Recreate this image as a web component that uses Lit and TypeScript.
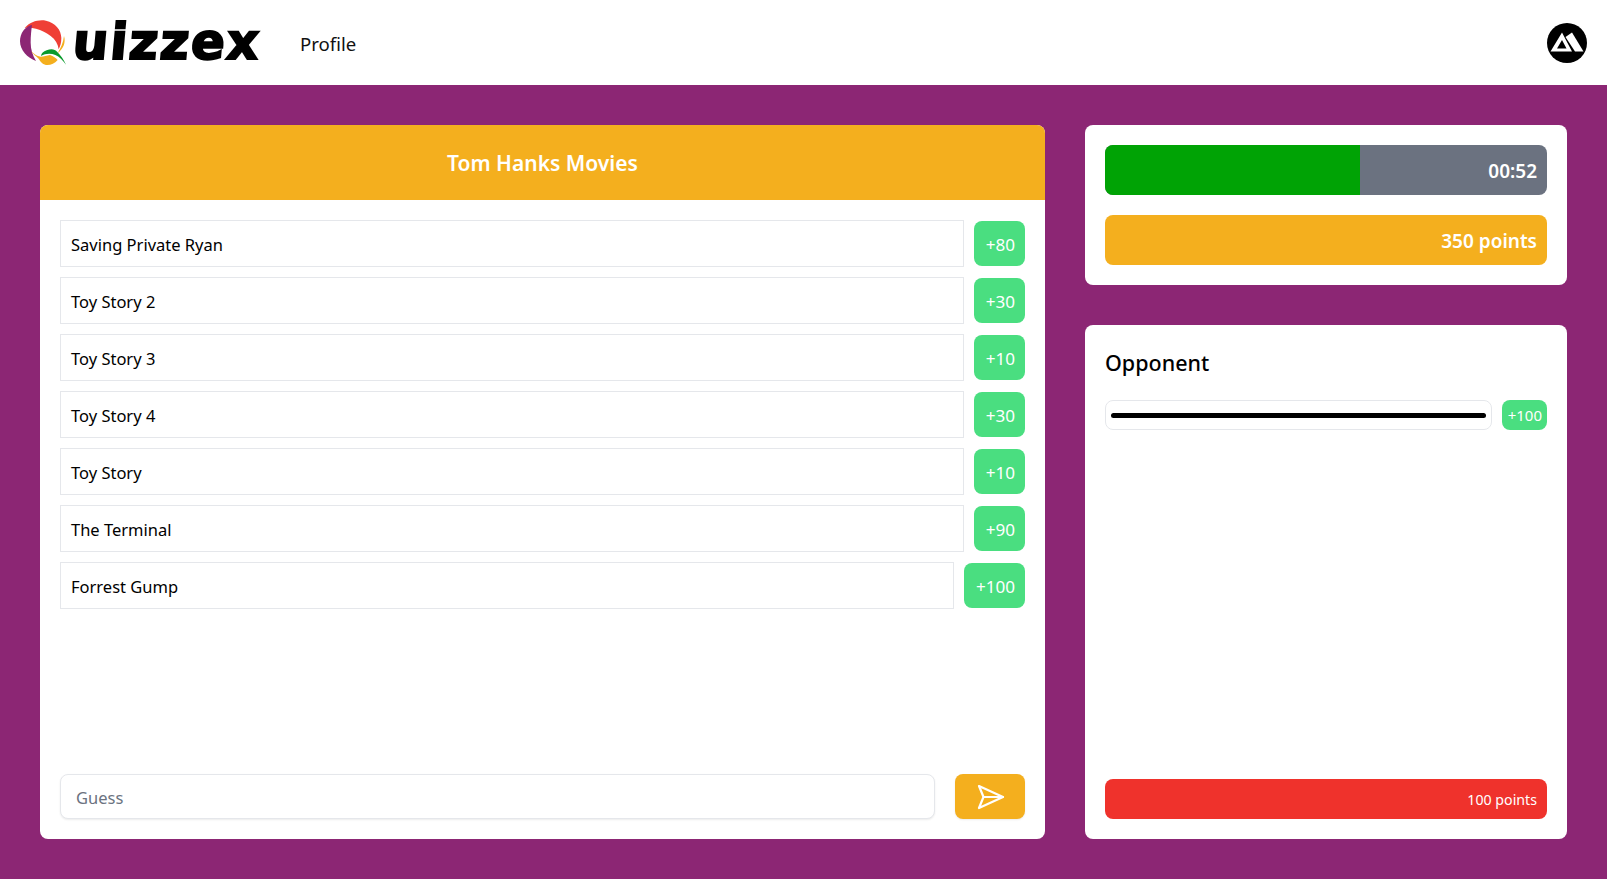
import { LitElement, html, css } from 'lit';
import { customElement } from 'lit/decorators.js';

const ANSWERS = [
  { title: 'Saving Private Ryan', points: 80 },
  { title: 'Toy Story 2', points: 30 },
  { title: 'Toy Story 3', points: 10 },
  { title: 'Toy Story 4', points: 30 },
  { title: 'Toy Story', points: 10 },
  { title: 'The Terminal', points: 90 },
  { title: 'Forrest Gump', points: 100 },
];

@customElement('app-root')
export class AppRoot extends LitElement {
  static styles = css`
    :host {
      display: block;
      height: 879px;
      overflow: hidden;
      background: #8c2674;
      color: #000;
      font-family: 'Noto Sans', 'Open Sans', sans-serif;
    }
    * { box-sizing: border-box; }

    .nav {
      display: flex;
      align-items: center;
      height: 85px;
      background: #fff;
      padding: 0 20px;
    }
    .brand { display: flex; align-items: center; width: 280px; }
    .q { width: 54px; height: 54px; flex: none; margin-left: -4px; }
    .wordmark {
      display: inline-block;
      font-family: 'DejaVu Sans', sans-serif;
      font-weight: 700;
      font-size: 50px;
      line-height: 1;
      letter-spacing: 1.800px;
      -webkit-text-stroke: 2px #000;
      transform: skewX(-5deg);
      margin: -2px 0 0 3px;
    }
    .link { font-size: 18.600px; color: #111; padding-top: 2px; }
    .avatar { width: 40px; height: 40px; margin-left: auto; }

    .main {
      display: grid;
      grid-template-columns: 1005px 482px;
      gap: 40px;
      padding: 40px;
      height: 794px;
    }
    .card { background: #fff; border-radius: 8px; overflow: hidden; }

    .quiz { display: flex; flex-direction: column; }
    .quiz-head {
      display: flex;
      align-items: center;
      justify-content: center;
      height: 75px;
      background: #f4af1e;
      color: #fff;
      font-size: 21px;
      font-weight: 600;
    }
    .quiz-body { flex: 1; display: flex; flex-direction: column; padding: 20px; }
    .answers { flex: 1; display: flex; flex-direction: column; gap: 10px; }
    .answer { display: flex; align-items: center; gap: 10px; height: 47px; }
    .answer-title {
      flex: 1;
      height: 47px;
      display: flex;
      align-items: center;
      padding: 2px 10px 0;
      border: 1px solid #e5e7eb;
      font-size: 16.500px;
    }
    .pts {
      display: flex;
      align-items: center;
      justify-content: center;
      height: 45px;
      padding: 1px 10px 0 12px;
      background: #4ade80;
      color: #fff;
      border-radius: 8px;
      font-size: 17.100px;
    }

    .guess { display: flex; gap: 20px; height: 45px; }
    .guess input {
      flex: 1;
      border: 1px solid #e5e7eb;
      border-radius: 8px;
      padding: 2px 15px 0;
      font: inherit;
      font-size: 16.500px;
      box-shadow: 0 1px 2px rgba(0, 0, 0, 0.08);
      outline: none;
    }
    .guess input::placeholder { color: #6b7280; }
    .send {
      width: 70px;
      border: 0;
      padding: 0 0 0 2px;
      border-radius: 8px;
      background: #f4af1e;
      display: flex;
      align-items: center;
      justify-content: center;
      box-shadow: 0 1px 2px rgba(0, 0, 0, 0.08);
    }
    .send svg { width: 28px; height: 26px; }

    .side { display: flex; flex-direction: column; gap: 40px; }
    .status { display: flex; flex-direction: column; gap: 20px; padding: 20px; height: 160px; }
    .bar {
      position: relative;
      height: 50px;
      border-radius: 8px;
      overflow: hidden;
      display: flex;
      align-items: center;
      justify-content: flex-end;
      padding: 0 10px;
      color: #fff;
      font-size: 19px;
      font-weight: 600;
    }
    .timer { background: #6b7280; }
    .timer .fill { position: absolute; left: 0; top: 0; bottom: 0; background: #00a305; }
    .timer span { position: relative; padding-top: 2px; }
    .score { background: #f4af1e; padding-top: 2px; }

    .opponent { flex: 1; display: flex; flex-direction: column; padding: 20px; }
    .opponent h2 { margin: 1px 0 20px; font-size: 21.500px; font-weight: 500; line-height: 34px; }
    .opp-row { flex: 1; display: flex; gap: 10px; align-items: flex-start; }
    .opp-track {
      flex: 1;
      height: 30px;
      display: flex;
      align-items: center;
      padding: 0 5px;
      border: 1px solid #e5e7eb;
      border-radius: 8px;
    }
    .opp-fill { height: 5px; width: 100%; background: #000; border-radius: 3px; }
    .opp-pts {
      height: 30px;
      display: flex;
      align-items: center;
      padding: 0 5px 0 6px;
      background: #4ade80;
      color: #fff;
      border-radius: 8px;
      font-size: 15px;
    }
    .opp-score {
      height: 40px;
      display: flex;
      align-items: center;
      justify-content: flex-end;
      padding: 0 10px;
      background: #ef322c;
      color: #fff;
      border-radius: 8px;
      font-size: 14.200px;
    }
  `;

  render() {
    return html`
      <nav class="nav">
        <div class="brand">
          <svg class="q" viewBox="0 0 162 162">
            <path fill="#ef3f36" d="M26 36C42 18 66 10 90 14C118 20 136 42 136 66C136 80 133 90 128 100C126 84 118 70 104 60C92 50 76 42 60 38C48 35 36 34 26 36Z" />
            <path fill="#8c2674" d="M48 27C26 32 12 52 12 76C12 102 34 126 60 135C50 118 44 100 44 80C44 60 46 42 48 27Z" />
            <path fill="#f4af1e" d="M144 60C150 80 142 98 125 112C134 96 142 80 144 60ZM45 105C54 114 62 121 74 122C84 122 92 118 102 117C112 120 120 126 125 132C116 142 106 147 94 147C82 147 74 138 68 128C60 120 50 114 45 105Z" />
            <path fill="#0a9a2c" d="M75 120C76 112 82 106 92 103C104 98 116 98 124 108C134 118 144 132 150 146C140 132 130 122 118 117C104 111 88 112 75 120Z" />
          </svg>
          <span class="wordmark">uizzex</span>
        </div>
        <span class="link">Profile</span>
        <svg class="avatar" viewBox="0 0 40 40">
          <circle cx="20" cy="20" r="20" fill="#000" />
          <path fill="#fff" fill-rule="evenodd" d="M3.500 28.500 15 9.500 25 28.500ZM10 25.500H19.500L15 17Z" />
          <path fill="#fff" d="M18.500 14 25 9.500 36.500 28.500H28Z" />
        </svg>
      </nav>
      <main class="main">
        <section class="card quiz">
          <header class="quiz-head">Tom Hanks Movies</header>
          <div class="quiz-body">
            <div class="answers">
              ${ANSWERS.map(
                (a) => html`
                  <div class="answer">
                    <div class="answer-title">${a.title}</div>
                    <div class="pts">+${a.points}</div>
                  </div>
                `
              )}
            </div>
            <div class="guess">
              <input placeholder="Guess" />
              <button class="send" aria-label="Send">
                <svg viewBox="0 0 28 26" fill="none" stroke="#fff" stroke-width="2.200" stroke-linejoin="round" stroke-linecap="round">
                  <path d="M2 2 26 13 2 24 6.500 13Z" />
                  <path d="M6.500 13H26" />
                </svg>
              </button>
            </div>
          </div>
        </section>
        <div class="side">
          <section class="card status">
            <div class="bar timer">
              <div class="fill" style="width: ${(255 / 442) * 100}%"></div>
              <span>00:52</span>
            </div>
            <div class="bar score">350 points</div>
          </section>
          <section class="card opponent">
            <h2>Opponent</h2>
            <div class="opp-row">
              <div class="opp-track"><div class="opp-fill"></div></div>
              <div class="opp-pts">+100</div>
            </div>
            <div class="opp-score">100 points</div>
          </section>
        </div>
      </main>
    `;
  }
}
